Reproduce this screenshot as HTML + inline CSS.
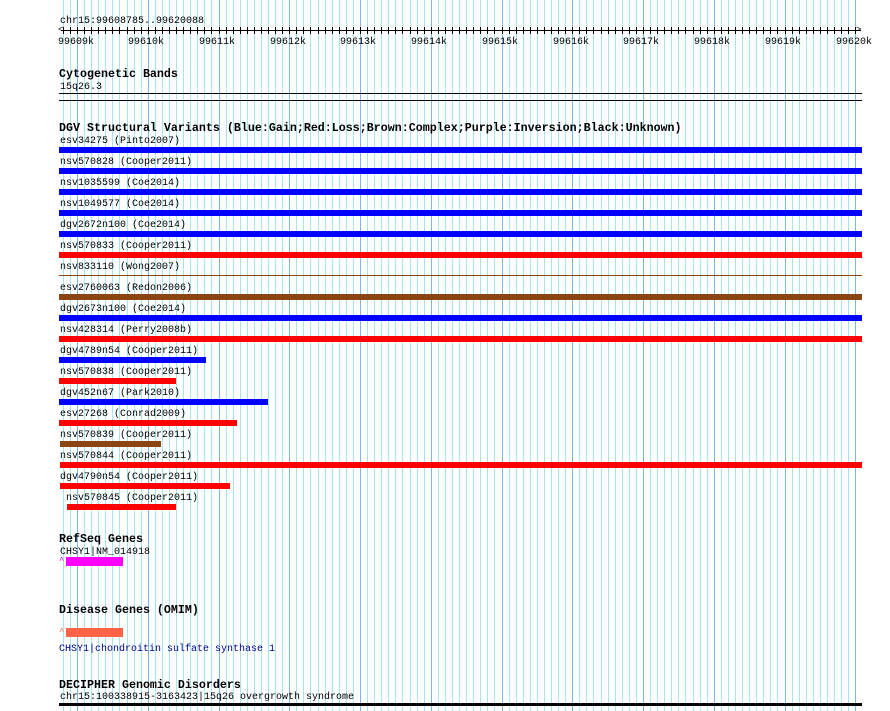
<!DOCTYPE html>
<html><head><meta charset="utf-8"><style>
body{margin:0;width:890px;height:711px;background:#fff;position:relative;overflow:hidden;font-family:"Liberation Mono",monospace;font-size:10px;color:#000}
.t{position:absolute;white-space:pre;line-height:11px}
.b{font-weight:bold;font-size:11.67px;letter-spacing:0}
.bar{position:absolute;height:6px}
.bl{background:#0000ff}.rd{background:#ff0000}.br{background:#8b4513}
.hl{position:absolute;background:#000}
.vl{position:absolute;top:0;width:1px;height:711px}
.tk{position:absolute;top:27px;width:1px;height:7px;background:#000}
#grid{position:absolute;left:0;top:0;width:890px;height:711px}
</style></head><body>
<div id="grid"></div>
<script>
(function(){var g=document.getElementById('grid'),h='';
for(var k=-2;k<=110;k++){var x=Math.round(77+k*7.075);if(x>862)break;
var major=(k%10===0);
h+='<div class="vl" style="left:'+x+'px;background:'+(major?'#7ab8e6':'#a6e6ee')+'"></div>';
h+='<div class="tk" style="left:'+x+'px"></div>';}
g.innerHTML=h;})();
</script>
<div class="t" style="left:60px;top:16px">chr15:99608785..99620088</div>
<div class="hl" style="left:61px;top:30px;width:800px;height:1px"></div>
<div class="t" style="left:58px;top:25px;font-size:9px">&lt;</div>
<div class="t" style="left:856px;top:25px;font-size:9px">&gt;</div>
<div class="t" style="left:58px;top:37px">99609k</div>
<div class="t" style="left:128px;top:37px">99610k</div>
<div class="t" style="left:199px;top:37px">99611k</div>
<div class="t" style="left:270px;top:37px">99612k</div>
<div class="t" style="left:340px;top:37px">99613k</div>
<div class="t" style="left:411px;top:37px">99614k</div>
<div class="t" style="left:482px;top:37px">99615k</div>
<div class="t" style="left:553px;top:37px">99616k</div>
<div class="t" style="left:623px;top:37px">99617k</div>
<div class="t" style="left:694px;top:37px">99618k</div>
<div class="t" style="left:765px;top:37px">99619k</div>
<div class="t" style="left:836px;top:37px">99620k</div>

<div class="t b" style="left:59px;top:69px">Cytogenetic Bands</div>
<div class="t" style="left:60px;top:82px">15q26.3</div>
<div class="hl" style="left:59px;top:93px;width:803px;height:1px"></div>
<div class="hl" style="left:59px;top:100px;width:803px;height:1px"></div>

<div class="t b" style="left:59px;top:123px">DGV Structural Variants (Blue:Gain;Red:Loss;Brown:Complex;Purple:Inversion;Black:Unknown)</div>
<div class="t" style="left:60px;top:136px">esv34275 (Pinto2007)</div><div class="bar bl" style="left:59px;top:147px;width:803px"></div>
<div class="t" style="left:60px;top:157px">nsv570828 (Cooper2011)</div><div class="bar bl" style="left:59px;top:168px;width:803px"></div>
<div class="t" style="left:60px;top:178px">nsv1035599 (Coe2014)</div><div class="bar bl" style="left:59px;top:189px;width:803px"></div>
<div class="t" style="left:60px;top:199px">nsv1049577 (Coe2014)</div><div class="bar bl" style="left:59px;top:210px;width:803px"></div>
<div class="t" style="left:60px;top:220px">dgv2672n100 (Coe2014)</div><div class="bar bl" style="left:59px;top:231px;width:803px"></div>
<div class="t" style="left:60px;top:241px">nsv570833 (Cooper2011)</div><div class="bar rd" style="left:59px;top:252px;width:803px"></div>
<div class="t" style="left:60px;top:262px">nsv833110 (Wong2007)</div><div class="bar br" style="left:59px;top:275px;width:803px;height:1px"></div>
<div class="t" style="left:60px;top:283px">esv2760063 (Redon2006)</div><div class="bar br" style="left:59px;top:294px;width:803px"></div>
<div class="t" style="left:60px;top:304px">dgv2673n100 (Coe2014)</div><div class="bar bl" style="left:59px;top:315px;width:803px"></div>
<div class="t" style="left:60px;top:325px">nsv428314 (Perry2008b)</div><div class="bar rd" style="left:59px;top:336px;width:803px"></div>
<div class="t" style="left:60px;top:346px">dgv4789n54 (Cooper2011)</div><div class="bar bl" style="left:59px;top:357px;width:147px"></div>
<div class="t" style="left:60px;top:367px">nsv570838 (Cooper2011)</div><div class="bar rd" style="left:59px;top:378px;width:117px"></div>
<div class="t" style="left:60px;top:388px">dgv452n67 (Park2010)</div><div class="bar bl" style="left:59px;top:399px;width:209px"></div>
<div class="t" style="left:60px;top:409px">esv27268 (Conrad2009)</div><div class="bar rd" style="left:59px;top:420px;width:178px"></div>
<div class="t" style="left:60px;top:430px">nsv570839 (Cooper2011)</div><div class="bar br" style="left:60px;top:441px;width:101px"></div>
<div class="t" style="left:60px;top:451px">nsv570844 (Cooper2011)</div><div class="bar rd" style="left:60px;top:462px;width:802px"></div>
<div class="t" style="left:60px;top:472px">dgv4790n54 (Cooper2011)</div><div class="bar rd" style="left:60px;top:483px;width:170px"></div>
<div class="t" style="left:66px;top:493px">nsv570845 (Cooper2011)</div><div class="bar rd" style="left:67px;top:504px;width:109px"></div>

<div class="t b" style="left:59px;top:534px">RefSeq Genes</div>
<div class="t" style="left:60px;top:547px">CHSY1|NM_014918</div>
<div class="t" style="left:59px;top:556px;color:#ff00ff;font-size:9px">^</div>
<div class="bar" style="left:66px;top:557px;width:57px;height:9px;background:#ff00ff"></div>

<div class="t b" style="left:59px;top:605px">Disease Genes (OMIM)</div>
<div class="t" style="left:59px;top:627px;color:#ff6347;font-size:9px">^</div>
<div class="bar" style="left:66px;top:628px;width:57px;height:9px;background:#ff6347"></div>
<div class="t" style="left:59px;top:644px;color:#00008b">CHSY1|chondroitin sulfate synthase 1</div>

<div class="t b" style="left:59px;top:680px">DECIPHER Genomic Disorders</div>
<div class="t" style="left:60px;top:692px">chr15:100338915-3163423|15q26 overgrowth syndrome</div>
<div class="hl" style="left:59px;top:703px;width:803px;height:3px"></div>
</body></html>
